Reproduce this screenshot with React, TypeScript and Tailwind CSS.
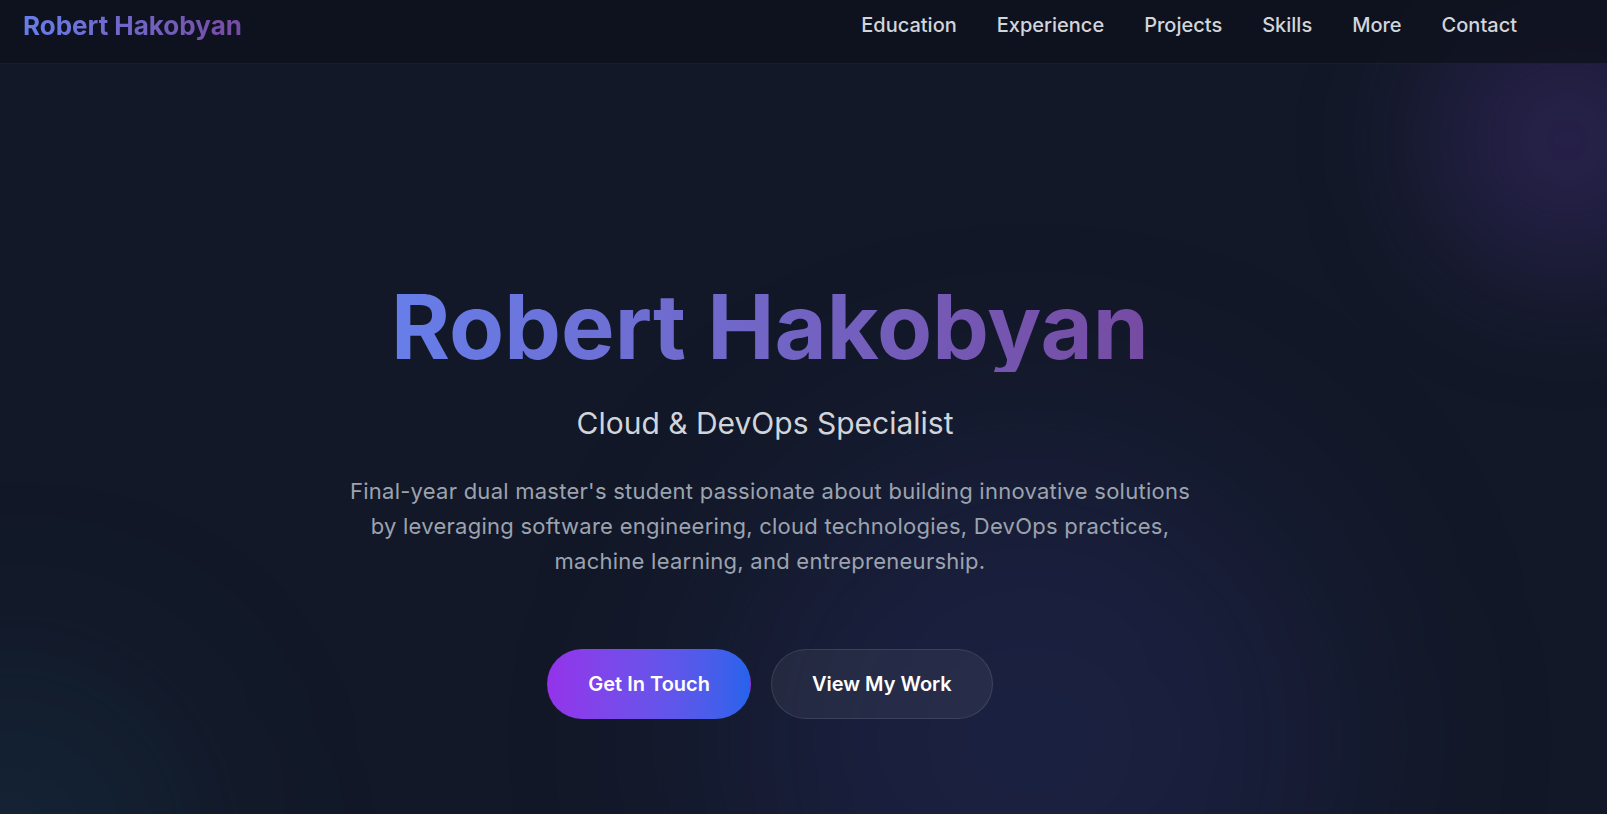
import React from "react";

const links = ["Education", "Experience", "Projects", "Skills", "More", "Contact"];

export default function App() {
  return (
    <div className="relative min-h-screen h-[814px] overflow-hidden bg-[#121827] font-[Inter,sans-serif]">
      {/* glows */}
      <div className="pointer-events-none absolute -right-[90px] top-[10px] h-[260px] w-[260px] rounded-full bg-[#6d3fc0]/25 blur-[70px]" />
      <div className="pointer-events-none absolute left-[730px] top-[440px] h-[600px] w-[600px] rounded-full bg-[#3b3f9e]/20 blur-[110px]" />
      <div className="pointer-events-none absolute -left-[160px] bottom-[-200px] h-[340px] w-[340px] rounded-full bg-[#1e5a7a]/20 blur-[100px]" />

      <header className="relative h-16 border-b border-white/[0.05] bg-[#0e121d]/80">
        <div className="flex h-[50px] w-[1540px] items-center justify-between px-[23px]">
          <span className="bg-linear-to-r from-[#667eea] to-[#764ba2] bg-clip-text text-[26px] font-bold text-transparent">
            Robert Hakobyan
          </span>
          <nav className="flex items-center gap-10">
            {links.map((l) => (
              <a key={l} href="#" className="text-[20px] font-medium text-gray-300">
                {l}
              </a>
            ))}
          </nav>
        </div>
      </header>

      <main className="relative flex w-[1540px] flex-col items-center pt-[218px] text-center">
        <h1 className="bg-linear-to-r from-[#667eea] to-[#764ba2] bg-clip-text text-[90px] font-bold leading-none text-transparent">
          Robert Hakobyan
        </h1>
        <h2 className="mt-[33px] mr-[10px] text-3xl font-normal text-[#d1d5db]">Cloud &amp; DevOps Specialist</h2>
        <p className="mt-[33px] max-w-[860px] text-[22px] leading-[35px] tracking-[0.25px] text-[#9ca3af]">
          Final-year dual master's student passionate about building innovative solutions by
          leveraging software engineering, cloud technologies, DevOps practices, machine learning,
          and entrepreneurship.
        </p>
        <div className="mt-[70px] flex items-center gap-5">
          <a
            href="#"
            className="rounded-full border border-transparent bg-linear-to-r from-[#9333ea] to-[#2563eb] px-10 py-5 text-[20px] leading-7 font-semibold text-white"
          >
            Get In Touch
          </a>
          <a
            href="#"
            className="rounded-full border border-white/10 bg-white/[0.06] px-10 py-5 text-[20px] leading-7 font-semibold text-white"
          >
            View My Work
          </a>
        </div>
      </main>
    </div>
  );
}
